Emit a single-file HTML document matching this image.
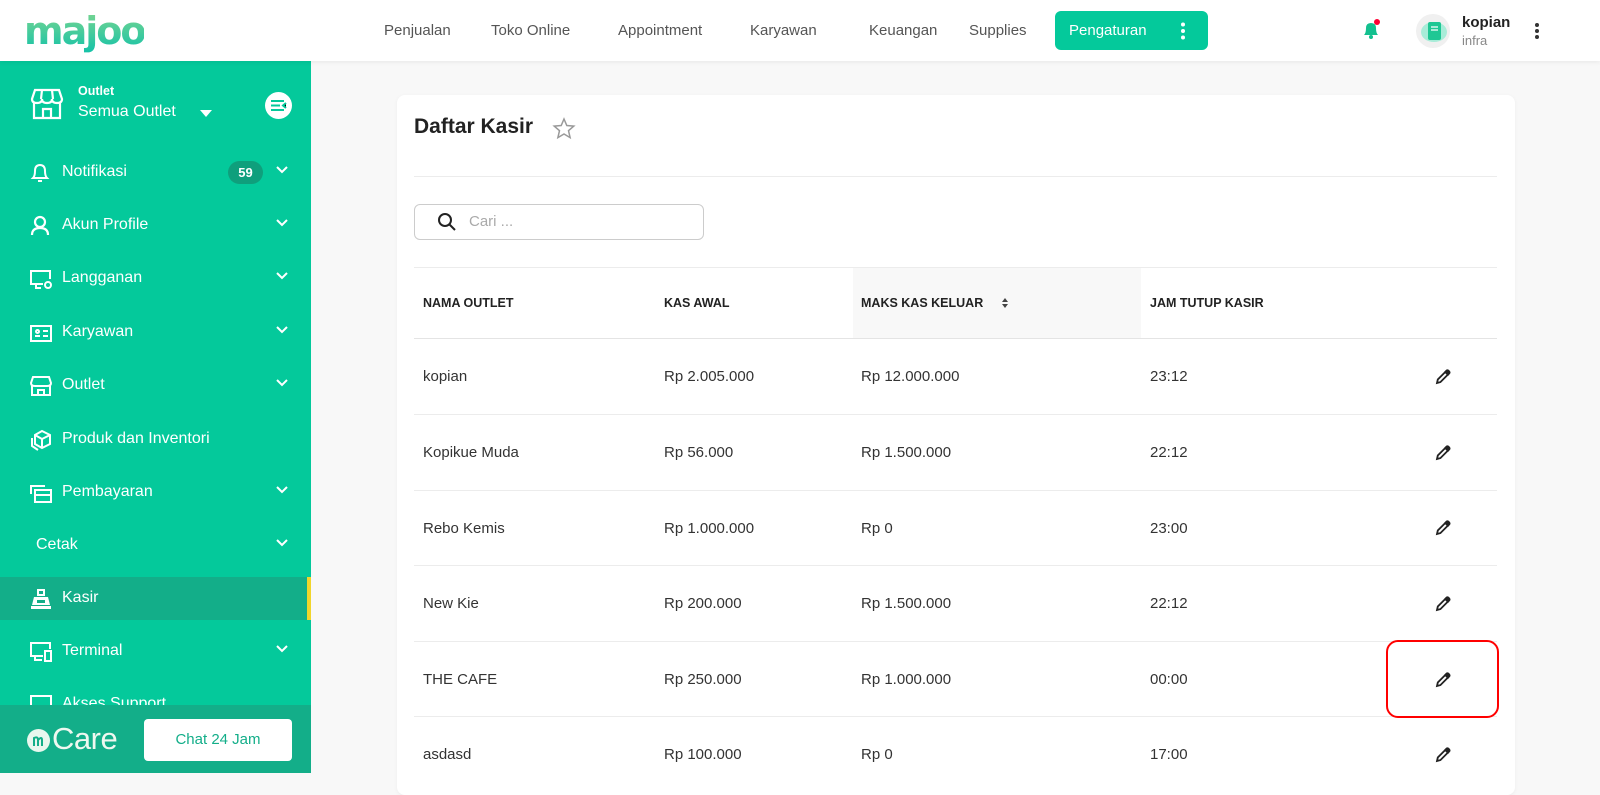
<!DOCTYPE html>
<html><head><meta charset="utf-8">
<style>
*{box-sizing:border-box;margin:0;padding:0}
body{width:1600px;height:773px;overflow:hidden;background:#f8f8f8;font-family:"Liberation Sans",sans-serif;position:relative;color:#222}
.top{position:absolute;left:0;top:0;width:1600px;height:61px;background:#fff;box-shadow:0 2px 4px rgba(0,0,0,.05);z-index:3}
.logo{position:absolute;left:24px;top:9px;font-size:38px;font-weight:bold;letter-spacing:-2px;color:#2cc0a0;background:linear-gradient(#7fd68f,#13c2a8);-webkit-background-clip:text;background-clip:text;-webkit-text-fill-color:transparent;font-family:"DejaVu Sans",sans-serif}
.nav{position:absolute;top:22px;font-size:15px;color:#555}
.btn{position:absolute;left:1055px;top:11px;width:153px;height:39px;background:#04c99b;border-radius:6px;color:#fff;font-size:15px;padding:11px 0 0 14px}
.side{position:absolute;left:0;top:61px;width:311px;height:712px;background:#04c99b;color:#fff;z-index:2}
.item{position:absolute;left:0;width:311px;height:43px;font-size:16px}
.item span.t{position:absolute;left:62px;top:12px}
.item svg.ic{position:absolute;left:29px;top:11px}
.chev{position:absolute;left:276px;top:15px}
.card{position:absolute;left:397px;top:95px;width:1118px;height:700px;background:#fff;border-radius:8px;box-shadow:0 1px 4px rgba(0,0,0,.05)}
.cell{position:absolute;font-size:15px;color:#333}
.hd{font-size:12.5px;font-weight:bold;color:#222}
.line{position:absolute;left:414px;width:1083px;height:1px;background:#ececec}
.pen{position:absolute;left:1435px}
</style></head><body>
<div class="top">
 <div class="logo">majoo</div>
 <div class="nav" style="left:384px">Penjualan</div>
 <div class="nav" style="left:491px">Toko Online</div>
 <div class="nav" style="left:618px">Appointment</div>
 <div class="nav" style="left:750px">Karyawan</div>
 <div class="nav" style="left:869px">Keuangan</div>
 <div class="nav" style="left:969px">Supplies</div>
 <div class="btn">Pengaturan<svg style="position:absolute;left:125px;top:11px" width="6" height="18"><circle cx="3" cy="2.5" r="2" fill="#fff"/><circle cx="3" cy="9" r="2" fill="#fff"/><circle cx="3" cy="15.5" r="2" fill="#fff"/></svg></div>
 <svg style="position:absolute;left:1361px;top:19px" width="20" height="22"><path d="M3 16 Q5 14 5 9 Q5 4 10 4 Q15 4 15 9 Q15 14 17 16 Z" fill="#13c08f"/><circle cx="10" cy="18" r="2" fill="#13c08f"/><circle cx="16" cy="3" r="3" fill="#f03"/></svg>
 <div style="position:absolute;left:1416px;top:14px;width:34px;height:34px;border-radius:50%;background:#f0f0f0"></div>
 <svg style="position:absolute;left:1420px;top:18px" width="28" height="26"><ellipse cx="14" cy="14" rx="13" ry="10" fill="#a8ecd8"/><rect x="8" y="4" width="13" height="18" rx="2" fill="#1fc794"/><path d="M11 9h7M11 12h7" stroke="#fff" stroke-width="1.2"/></svg>
 <div style="position:absolute;left:1462px;top:14px;font-size:15px;font-weight:bold;color:#222">kopian</div>
 <div style="position:absolute;left:1462px;top:33px;font-size:13px;color:#888">infra</div>
 <svg style="position:absolute;left:1534px;top:22px" width="6" height="18"><circle cx="3" cy="3" r="2" fill="#333"/><circle cx="3" cy="9" r="2" fill="#333"/><circle cx="3" cy="15" r="2" fill="#333"/></svg>
</div>

<div class="side">
 <svg style="position:absolute;left:29px;top:26px" width="36" height="34" fill="none" stroke="#fff" stroke-width="2.2"><path d="M3 12 L6 3 H30 L33 12 Q33 16 28 16 Q23 16 23 12 Q23 16 18 16 Q13 16 13 12 Q13 16 8 16 Q3 16 3 12Z M5 16 V31 H31 V16 M14 31 V22 H22 V31 M13 3 L12 12 M23 3 L24 12"/></svg>
 <div style="position:absolute;left:78px;top:23px;font-size:12.5px;font-weight:bold">Outlet</div>
 <div style="position:absolute;left:78px;top:42px;font-size:16px">Semua Outlet</div>
 <svg style="position:absolute;left:199px;top:48px" width="14" height="9"><path d="M1 1H13L7 8Z" fill="#fff"/></svg>
 <div style="position:absolute;left:265px;top:31px;width:27px;height:27px;border-radius:50%;background:#fff"></div>
 <svg style="position:absolute;left:270px;top:38px" width="18" height="13" stroke="#04c99b" stroke-width="2"><path d="M1 2H14M1 6.5H10M1 11H14M16 4L13 6.5 16 9"/></svg>

 <div class="item" style="top:90px"><svg class="ic" width="22" height="22" fill="none" stroke="#fff" stroke-width="2"><path d="M4 16 Q6 14 6 9 Q6 3 11 3 Q16 3 16 9 Q16 14 18 16 Z M9 19 H13"/></svg><span class="t">Notifikasi</span>
  <div style="position:absolute;left:228px;top:10px;width:35px;height:23px;border-radius:12px;background:#0f9f7c;font-size:13px;font-weight:bold;text-align:center;padding-top:4px">59</div>
  <svg class="chev" width="12" height="8" fill="none" stroke="#fff" stroke-width="2"><path d="M1 1L6 6 11 1"/></svg></div>
 <div class="item" style="top:143px"><svg class="ic" width="22" height="22" fill="none" stroke="#fff" stroke-width="2.2"><circle cx="11" cy="7" r="5"/><path d="M3 20 Q3 13 11 13 Q19 13 19 20"/></svg><span class="t">Akun Profile</span><svg class="chev" width="12" height="8" fill="none" stroke="#fff" stroke-width="2"><path d="M1 1L6 6 11 1"/></svg></div>
 <div class="item" style="top:196px"><svg class="ic" width="24" height="22" fill="none" stroke="#fff" stroke-width="2"><path d="M14 16H2V3H21V11M7 16V20H12"/><circle cx="19" cy="17" r="3"/></svg><span class="t">Langganan</span><svg class="chev" width="12" height="8" fill="none" stroke="#fff" stroke-width="2"><path d="M1 1L6 6 11 1"/></svg></div>
 <div class="item" style="top:250px"><svg class="ic" width="24" height="22" fill="none" stroke="#fff" stroke-width="2"><rect x="2" y="4" width="20" height="15"/><path d="M6 14H11M14 9H19M14 14H19"/><circle cx="8.5" cy="9.5" r="1.5"/></svg><span class="t">Karyawan</span><svg class="chev" width="12" height="8" fill="none" stroke="#fff" stroke-width="2"><path d="M1 1L6 6 11 1"/></svg></div>
 <div class="item" style="top:303px"><svg class="ic" width="24" height="22" fill="none" stroke="#fff" stroke-width="2"><path d="M2 8L4 2H20L22 8Q22 11 18 11Q12 11 6 11Q2 11 2 8Z M3 11V20H21V11 M9 20V15H15V20"/></svg><span class="t">Outlet</span><svg class="chev" width="12" height="8" fill="none" stroke="#fff" stroke-width="2"><path d="M1 1L6 6 11 1"/></svg></div>
 <div class="item" style="top:357px"><svg class="ic" width="24" height="22" fill="none" stroke="#fff" stroke-width="2"><path d="M13 2L21 6V15L13 19L6 15V6Z M6 6L13 10L21 6 M13 10V19 M3 9V17L9 21"/></svg><span class="t">Produk dan Inventori</span></div>
 <div class="item" style="top:410px"><svg class="ic" width="24" height="22" fill="none" stroke="#fff" stroke-width="2"><path d="M2 12V4H16M6 8H22V20H6Z M6 13H22"/></svg><span class="t">Pembayaran</span><svg class="chev" width="12" height="8" fill="none" stroke="#fff" stroke-width="2"><path d="M1 1L6 6 11 1"/></svg></div>
 <div class="item" style="top:463px"><span class="t" style="left:36px">Cetak</span><svg class="chev" width="12" height="8" fill="none" stroke="#fff" stroke-width="2"><path d="M1 1L6 6 11 1"/></svg></div>
 <div class="item" style="top:516px;background:#13ae89"><div style="position:absolute;right:0;top:0;width:4px;height:43px;background:#f1d52b"></div><svg class="ic" width="24" height="22" fill="#fff"><path d="M8 1H16V8H8Z M5 9H19L21 17H3Z M2 18H22V21H2Z" /><rect x="10" y="3" width="4" height="3" fill="#13ae89"/><rect x="8" y="12" width="8" height="3" fill="#13ae89"/></svg><span class="t">Kasir</span></div>
 <div class="item" style="top:569px"><svg class="ic" width="24" height="22" fill="none" stroke="#fff" stroke-width="2"><path d="M14 15H2V2H21V8M6 15V19H13"/><rect x="16" y="10" width="6" height="10"/></svg><span class="t">Terminal</span><svg class="chev" width="12" height="8" fill="none" stroke="#fff" stroke-width="2"><path d="M1 1L6 6 11 1"/></svg></div>
 <div class="item" style="top:622px"><svg class="ic" width="24" height="22" fill="none" stroke="#fff" stroke-width="2"><rect x="2" y="2" width="20" height="16"/></svg><span class="t">Akses Support</span></div>
 <div style="position:absolute;left:0;top:644px;width:311px;height:68px;background:#13ae89">
  <div style="position:absolute;left:27px;top:24px;width:23px;height:23px;border-radius:50%;background:#e8f7ee"></div>
  <svg style="position:absolute;left:32px;top:30px" width="13" height="12" fill="none" stroke="#13ae89" stroke-width="2"><path d="M2 11V3Q6 1 6 5V11M6 5Q10 1 10 5V11"/></svg>
  <div style="position:absolute;left:52px;top:16px;font-size:31px;color:#eef8f0;letter-spacing:-0.5px">Care</div>
  <div style="position:absolute;left:144px;top:14px;width:148px;height:42px;background:#fff;border-radius:4px;color:#13ae89;font-size:15px;text-align:center;padding-top:12px">Chat 24 Jam</div>
 </div>
</div>

<div class="card"></div>
<div style="position:absolute;left:414px;top:115px;font-size:21px;font-weight:bold;color:#222">Daftar Kasir</div>
<svg style="position:absolute;left:552px;top:117px" width="24" height="23" fill="none" stroke="#999" stroke-width="1.5"><path d="M12 2L14.8 8.5 21.8 9.1 16.5 13.7 18.1 20.6 12 17 5.9 20.6 7.5 13.7 2.2 9.1 9.2 8.5Z"/></svg>
<div class="line" style="top:176px"></div>
<div style="position:absolute;left:414px;top:204px;width:290px;height:36px;border:1px solid #ccc;border-radius:6px"></div>
<svg style="position:absolute;left:437px;top:212px" width="20" height="20" fill="none" stroke="#222" stroke-width="2"><circle cx="8" cy="8" r="6"/><path d="M12.5 12.5L18 18"/></svg>
<div style="position:absolute;left:469px;top:213px;font-size:15px;color:#aaa">Cari ...</div>
<div class="line" style="top:267px"></div>
<div style="position:absolute;left:853px;top:268px;width:288px;height:70px;background:#f8f8f8"></div>
<div class="cell hd" style="left:423px;top:296px">NAMA OUTLET</div>
<div class="cell hd" style="left:664px;top:296px">KAS AWAL</div>
<div class="cell hd" style="left:861px;top:296px">MAKS KAS KELUAR</div>
<svg style="position:absolute;left:1001px;top:297px" width="8" height="12" fill="#444"><path d="M1 5L4 1 7 5Z M1 7L4 11 7 7Z"/></svg>
<div class="cell hd" style="left:1150px;top:296px">JAM TUTUP KASIR</div>
<div class="line" style="top:338px;background:#e4e4e4"></div>

<div class="cell" style="left:423px;top:368px">kopian</div><div class="cell" style="left:664px;top:368px">Rp 2.005.000</div><div class="cell" style="left:861px;top:368px">Rp 12.000.000</div><div class="cell" style="left:1150px;top:368px">23:12</div>
<div class="line" style="top:414px"></div>
<div class="cell" style="left:423px;top:444px">Kopikue Muda</div><div class="cell" style="left:664px;top:444px">Rp 56.000</div><div class="cell" style="left:861px;top:444px">Rp 1.500.000</div><div class="cell" style="left:1150px;top:444px">22:12</div>
<div class="line" style="top:490px"></div>
<div class="cell" style="left:423px;top:520px">Rebo Kemis</div><div class="cell" style="left:664px;top:520px">Rp 1.000.000</div><div class="cell" style="left:861px;top:520px">Rp 0</div><div class="cell" style="left:1150px;top:520px">23:00</div>
<div class="line" style="top:565px"></div>
<div class="cell" style="left:423px;top:595px">New Kie</div><div class="cell" style="left:664px;top:595px">Rp 200.000</div><div class="cell" style="left:861px;top:595px">Rp 1.500.000</div><div class="cell" style="left:1150px;top:595px">22:12</div>
<div class="line" style="top:641px"></div>
<div class="cell" style="left:423px;top:671px">THE CAFE</div><div class="cell" style="left:664px;top:671px">Rp 250.000</div><div class="cell" style="left:861px;top:671px">Rp 1.000.000</div><div class="cell" style="left:1150px;top:671px">00:00</div>
<div class="line" style="top:716px"></div>
<div class="cell" style="left:423px;top:746px">asdasd</div><div class="cell" style="left:664px;top:746px">Rp 100.000</div><div class="cell" style="left:861px;top:746px">Rp 0</div><div class="cell" style="left:1150px;top:746px">17:00</div>

<svg class="pen" style="top:368px" width="17" height="17" fill="none" stroke="#222" stroke-width="1.8"><path d="M2 15L2.8 11.5 11.5 2.8Q12.5 1.8 13.8 3.1Q15.1 4.4 14.1 5.4L5.4 14.1Z M10.3 4L13 6.7"/><path d="M11.5 2.8Q12.5 1.8 13.8 3.1Q15.1 4.4 14.1 5.4L13 6.7 10.3 4Z" fill="#222"/></svg>
<svg class="pen" style="top:444px" width="17" height="17" fill="none" stroke="#222" stroke-width="1.8"><path d="M2 15L2.8 11.5 11.5 2.8Q12.5 1.8 13.8 3.1Q15.1 4.4 14.1 5.4L5.4 14.1Z M10.3 4L13 6.7"/><path d="M11.5 2.8Q12.5 1.8 13.8 3.1Q15.1 4.4 14.1 5.4L13 6.7 10.3 4Z" fill="#222"/></svg>
<svg class="pen" style="top:519px" width="17" height="17" fill="none" stroke="#222" stroke-width="1.8"><path d="M2 15L2.8 11.5 11.5 2.8Q12.5 1.8 13.8 3.1Q15.1 4.4 14.1 5.4L5.4 14.1Z M10.3 4L13 6.7"/><path d="M11.5 2.8Q12.5 1.8 13.8 3.1Q15.1 4.4 14.1 5.4L13 6.7 10.3 4Z" fill="#222"/></svg>
<svg class="pen" style="top:595px" width="17" height="17" fill="none" stroke="#222" stroke-width="1.8"><path d="M2 15L2.8 11.5 11.5 2.8Q12.5 1.8 13.8 3.1Q15.1 4.4 14.1 5.4L5.4 14.1Z M10.3 4L13 6.7"/><path d="M11.5 2.8Q12.5 1.8 13.8 3.1Q15.1 4.4 14.1 5.4L13 6.7 10.3 4Z" fill="#222"/></svg>
<svg class="pen" style="top:671px" width="17" height="17" fill="none" stroke="#222" stroke-width="1.8"><path d="M2 15L2.8 11.5 11.5 2.8Q12.5 1.8 13.8 3.1Q15.1 4.4 14.1 5.4L5.4 14.1Z M10.3 4L13 6.7"/><path d="M11.5 2.8Q12.5 1.8 13.8 3.1Q15.1 4.4 14.1 5.4L13 6.7 10.3 4Z" fill="#222"/></svg>
<svg class="pen" style="top:746px" width="17" height="17" fill="none" stroke="#222" stroke-width="1.8"><path d="M2 15L2.8 11.5 11.5 2.8Q12.5 1.8 13.8 3.1Q15.1 4.4 14.1 5.4L5.4 14.1Z M10.3 4L13 6.7"/><path d="M11.5 2.8Q12.5 1.8 13.8 3.1Q15.1 4.4 14.1 5.4L13 6.7 10.3 4Z" fill="#222"/></svg>
<div style="position:absolute;left:1386px;top:640px;width:113px;height:78px;border:2px solid #f00;border-radius:12px"></div>
</body></html>
